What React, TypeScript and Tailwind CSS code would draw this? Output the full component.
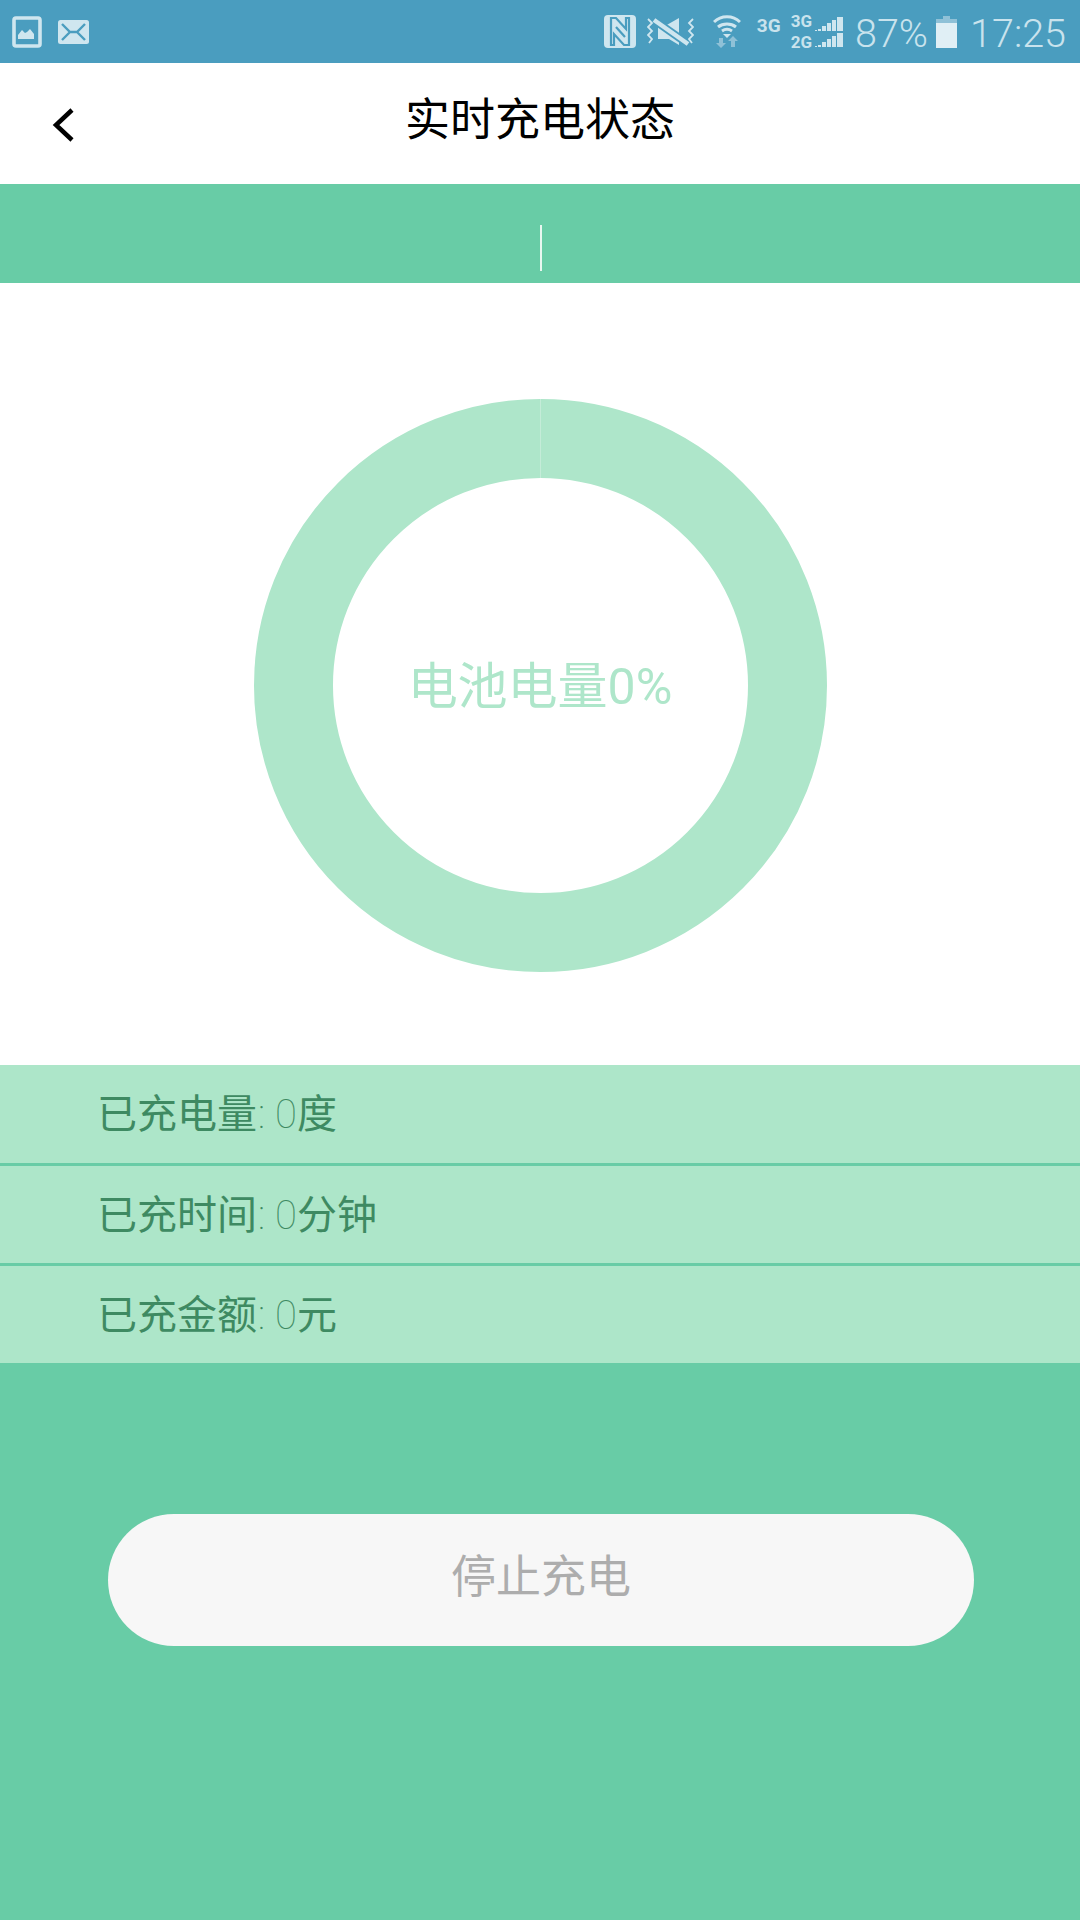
const rows = [
  { label: '已充电量', value: '0', unit: '度', height: 'h-[101px]' },
  { label: '已充时间', value: '0', unit: '分钟', height: 'h-[100px]' },
  { label: '已充金额', value: '0', unit: '元', height: 'h-[97px]' },
];

const cjk = "font-['Roboto','Noto_Sans_CJK_SC',sans-serif]";
const LIGHT = '#cfe6ef';
const BAR = '#4a9dbf';
const DIM = '#8fc1d7';

function PictureIcon() {
  return (
    <svg width="30" height="32" viewBox="0 0 30 32" className="shrink-0">
      <rect x="2" y="2" width="26" height="28" rx="2" fill="none" stroke={LIGHT} strokeWidth="3.6" />
      <path d="M6 23v-4l4-5 3 3 2-1 3-3 4 5v5z" fill={LIGHT} />
    </svg>
  );
}

function MailIcon() {
  return (
    <svg width="31" height="24" viewBox="0 0 31 24" className="shrink-0">
      <rect width="31" height="24" rx="2.5" fill={LIGHT} />
      <path d="M4 4l8 8h7l8-8M4 20l8-8M27 20l-8-8" fill="none" stroke={BAR} strokeWidth="2.4" />
    </svg>
  );
}

function NfcIcon() {
  return (
    <svg width="32" height="33" viewBox="0 0 32 33" className="shrink-0">
      <rect width="32" height="33" rx="4" fill={LIGHT} />
      <path d="M7 3h5l10 11V3h3v27h-5L10 19v11H7z" fill="none" stroke={BAR} strokeWidth="2.2" />
      <path d="M12 12l9 10" stroke={BAR} strokeWidth="2.2" />
    </svg>
  );
}

function MuteVibrateIcon() {
  return (
    <svg width="47" height="30" viewBox="0 0 47 30" className="shrink-0">
      <path d="M11 9h7l14-8v27l-10-6H11z" fill={LIGHT} />
      <path d="M7 3l34 24" stroke={BAR} strokeWidth="8" />
      <path d="M7 3l34 24" stroke={LIGHT} strokeWidth="4.5" />
      <path d="M1 2l4 4-4 4 4 4-4 4 4 4-3 4M46 2l-4 4 4 4-4 4 4 4-4 4 3 4" fill="none" stroke={LIGHT} strokeWidth="1.8" />
    </svg>
  );
}

function WifiIcon() {
  return (
    <svg width="28" height="33" viewBox="0 0 28 33" className="shrink-0">
      <path d="M1 7c7-7 19-7 26 0M5 12c5-4 13-4 18 0M9 16c3-2 7-2 10 0" fill="none" stroke={LIGHT} strokeWidth="3" />
      <path d="M10 19h8l-4 4z" fill={LIGHT} />
      <path d="M6 23v5H3l5 5 5-5h-3v-5z" fill={DIM} />
      <path d="M20 21l-5 5h3v6h4v-6h3z" fill={DIM} />
    </svg>
  );
}

function SignalIcon() {
  return (
    <svg width="28" height="14" viewBox="0 0 28 14" className="block shrink-0">
      <path d="M0 13h2v1H0zM3 12h3v2H3zM7 9h4v5H7zM12 6h4v8h-4zM17 3h4v11h-4zM22 0h6v14h-6z" fill={LIGHT} />
    </svg>
  );
}

function BatteryIcon() {
  return (
    <svg width="21" height="32" viewBox="0 0 21 32" className="shrink-0">
      <path d="M7 0h7v3H7zM0 3h21v4H0z" fill={DIM} />
      <path d="M0 7h21v25H0z" fill="#e0eff5" />
    </svg>
  );
}

function StatusBar() {
  return (
    <div className="flex h-[63px] items-center bg-[#4a9dbf] pl-3 pr-[14px] text-[#c9e3ed]">
      <PictureIcon />
      <div className="ml-[16px]">
        <MailIcon />
      </div>
      <div className="ml-auto flex items-center">
        <NfcIcon />
        <div className="ml-[11px]">
          <MuteVibrateIcon />
        </div>
        <div className="ml-[19px]">
          <WifiIcon />
        </div>
        <span className="mb-[13px] ml-[16px] font-['Roboto',sans-serif] text-[19px] font-bold leading-none">3G</span>
        <div className="ml-[10px] flex items-center gap-[3px]">
          <div className="flex flex-col font-['Roboto',sans-serif] text-[17px] font-bold leading-[21px]">
            <span>3G</span>
            <span>2G</span>
          </div>
          <div className="flex flex-col gap-[2px]">
            <SignalIcon />
            <SignalIcon />
          </div>
        </div>
        <span className="ml-[12px] mt-[5px] font-['Roboto',sans-serif] text-[39.5px] font-light leading-none">87%</span>
        <div className="ml-[8px]">
          <BatteryIcon />
        </div>
        <span className="ml-[13px] mt-[5px] font-['Roboto',sans-serif] text-[39.5px] font-light leading-none">17:25</span>
      </div>
    </div>
  );
}

function Header() {
  return (
    <div className="relative flex h-[121px] items-center justify-center bg-white pb-[7px]">
      <svg width="22" height="34" viewBox="0 0 22 34" className="absolute left-[52px] top-[45px]">
        <path d="M20 2L4 17l16 15" fill="none" stroke="#000" strokeWidth="4.5" />
      </svg>
      <span className={`text-[45px] leading-none text-black ${cjk}`}>实时充电状态</span>
    </div>
  );
}

function ChargeRing() {
  return (
    <div className="flex h-[782px] items-center justify-center bg-white pt-[23px]">
      <div className="relative flex h-[573px] w-[573px] items-center justify-center rounded-full border-[79px] border-[#aee6ca]">
        <div className="absolute left-1/2 top-[-79px] h-[79px] w-px bg-[#c4ecd8]" />
        <span className={`mt-[2px] whitespace-nowrap text-[50px] leading-none text-[#aee6ca] ${cjk}`}>电池电量0%</span>
      </div>
    </div>
  );
}

function InfoRow({ label, value, unit, height, last }: { label: string; value: string; unit: string; height: string; last?: boolean }) {
  return (
    <div className={`flex items-center bg-[#ade6c9] pl-[97px] pt-[2px] text-[40px] leading-none text-[#3e8a62] ${height} ${last ? '' : 'border-b-[3px] border-[#68cca6]'} ${cjk}`}>
      <span>{label}</span>
      <span className="ml-[1px] font-thin">:</span>
      <span className="ml-[10px] font-thin">{value}</span>
      <span>{unit}</span>
    </div>
  );
}

export default function App() {
  return (
    <div className="flex h-[1920px] w-[1080px] flex-col overflow-hidden bg-[#68cca6]">
      <StatusBar />
      <Header />
      <div className="flex h-[99px] items-end justify-center bg-[#68cca6] pb-[12px] pl-[2px]">
        <div className="h-[46px] w-[2px] bg-[#e8f7f0]" />
      </div>
      <ChargeRing />
      {rows.map((r, i) => (
        <InfoRow key={r.label} {...r} last={i === rows.length - 1} />
      ))}
      <div className="ml-[108px] mr-[106px] mt-[151px] flex h-[132px] items-center justify-center rounded-full bg-[#f7f7f7] pb-[5px]">
        <span className={`text-[45px] leading-none text-[#adadad] ${cjk}`}>停止充电</span>
      </div>
    </div>
  );
}
